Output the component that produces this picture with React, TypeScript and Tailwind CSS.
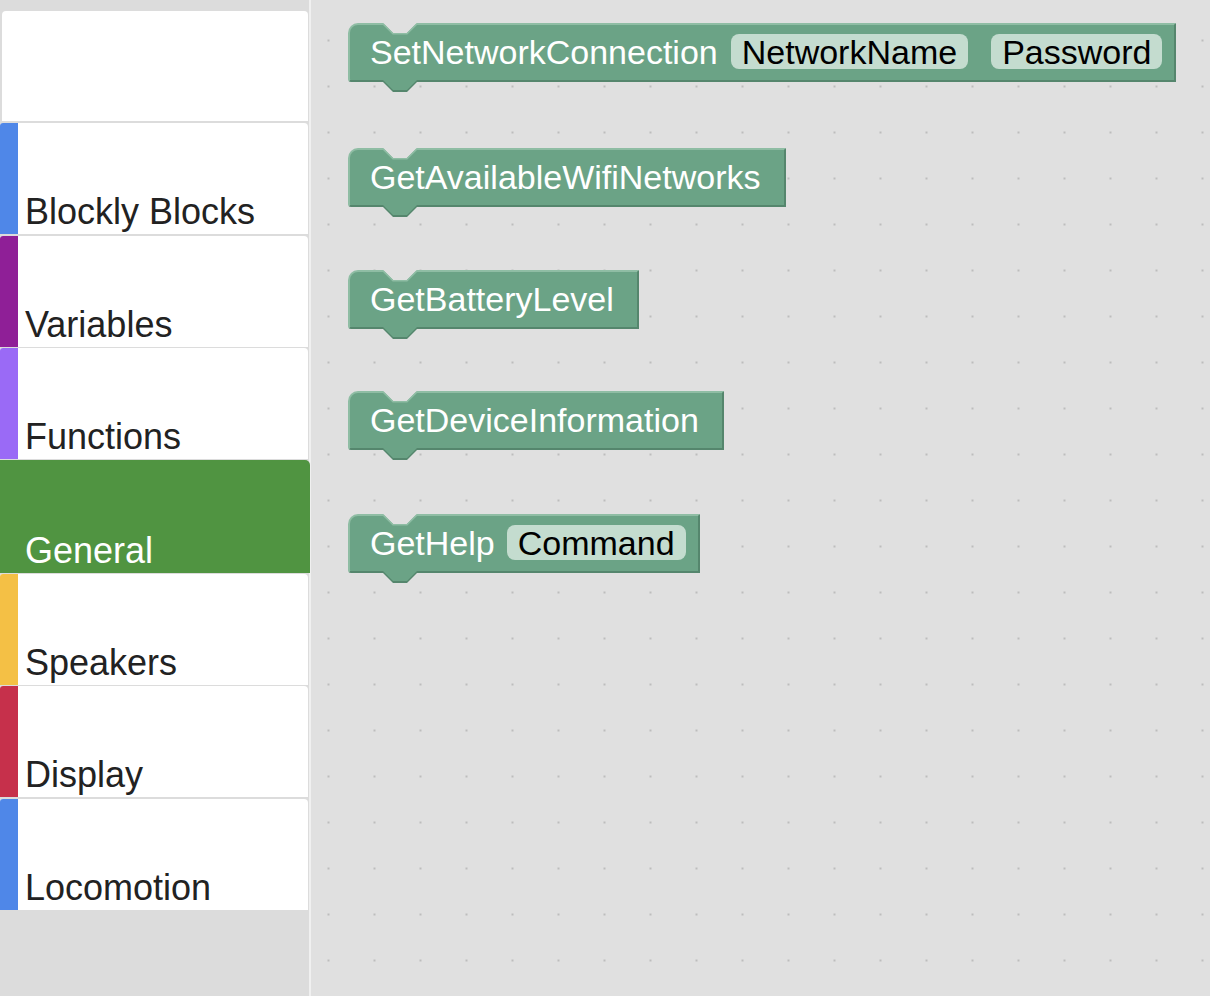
import React from "react";

const BLOCK = "#6ba386";
const DARK = "#55866d";
const LIGHT = "#8fbda4";
const WS = "#e0e0e0";

function Pill({ children, className }: { children: React.ReactNode; className: string }) {
  return (
    <div className={"flex items-center h-[35px] px-[11px] rounded-[8px] bg-[#c4dccf] text-black " + className}>
      {children}
    </div>
  );
}

function Block({ label, children, className }: { label: string; children?: React.ReactNode; className: string }) {
  return (
    <div
      className={
        "relative self-start flex items-center h-[59px] bg-[#6ba386] rounded-tl-[10px] rounded-bl-[3px] border-t-2 border-l-2 border-b-2 border-r-2 border-t-[#8fbda4] border-l-[#8fbda4] border-b-[#55866d] border-r-[#55866d] pl-[20px] pb-[2px] text-white text-[34px] leading-none " +
        className
      }
    >
      <svg className="absolute left-[33px] top-[-2px]" width="34" height="13" viewBox="0 0 34 13">
        <polygon points="0,0 10,10 24,10 34,0" fill={WS} />
        <polyline points="0,0.8 10,10.8 24,10.8 34,0.8" fill="none" stroke={LIGHT} strokeWidth="1.6" />
      </svg>
      <span className="whitespace-nowrap">{label}</span>
      {children}
      <svg className="absolute left-[33px] top-full" width="34" height="12" viewBox="0 0 34 12">
        <polygon points="0,0 34,0 34,2 24,12 10,12 0,2" fill={DARK} />
        <polygon points="0,0 34,0 24,10 10,10" fill={BLOCK} />
      </svg>
    </div>
  );
}

function Item({ label, bar }: { label: string; bar: string }) {
  return (
    <div className="flex h-[111px] w-[308px] bg-white rounded-tr-[4px] rounded-tl-[3px] overflow-hidden">
      <div className={"w-[18px] shrink-0 " + bar} />
      <div className="flex items-end pb-[4px] pl-[7px] text-[36px] leading-none text-[#222222]">{label}</div>
    </div>
  );
}

export default function App() {
  return (
    <div className="flex h-[996px] w-[1210px] overflow-hidden font-['Liberation_Sans',Arial,sans-serif]">
      <div className="w-[311px] shrink-0 bg-[#dcdcdc] border-r-2 border-r-[#f0f0f0] pt-[11px] flex flex-col gap-[1.7px]">
        <div className="ml-[2px] w-[306px] h-[110px] bg-white rounded-t-[4px] mb-[0.3px]" />
        <Item label="Blockly Blocks" bar="bg-[#4f87e8]" />
        <Item label="Variables" bar="bg-[#8f1f97]" />
        <Item label="Functions" bar="bg-[#9a6af6]" />
        <div className="flex items-end h-[113px] w-[310px] -my-[1px] bg-[#509441] rounded-tr-[5px] pb-[4px] pl-[25px] text-[36px] leading-none text-white">
          General
        </div>
        <Item label="Speakers" bar="bg-[#f4c045]" />
        <Item label="Display" bar="bg-[#c6304b]" />
        <Item label="Locomotion" bar="bg-[#4f87e8]" />
      </div>
      <div className="flex-1 flex flex-col pl-[37px] bg-[#e0e0e0] bg-[radial-gradient(circle,#bdbdbd_0.7px,transparent_1.3px)] bg-[length:46px_46px] bg-[position:-5.5px_17.5px]">
        <Block label="SetNetworkConnection" className="mt-[23px] pr-[12px]">
          <Pill className="ml-[13px]">NetworkName</Pill>
          <Pill className="ml-[23px]">Password</Pill>
        </Block>
        <Block label="GetAvailableWifiNetworks" className="mt-[66px] pr-[23px]" />
        <Block label="GetBatteryLevel" className="mt-[63px] pr-[23px]" />
        <Block label="GetDeviceInformation" className="mt-[62px] pr-[23px]" />
        <Block label="GetHelp" className="mt-[64px] pr-[12px]">
          <Pill className="ml-[12px]">Command</Pill>
        </Block>
      </div>
    </div>
  );
}
